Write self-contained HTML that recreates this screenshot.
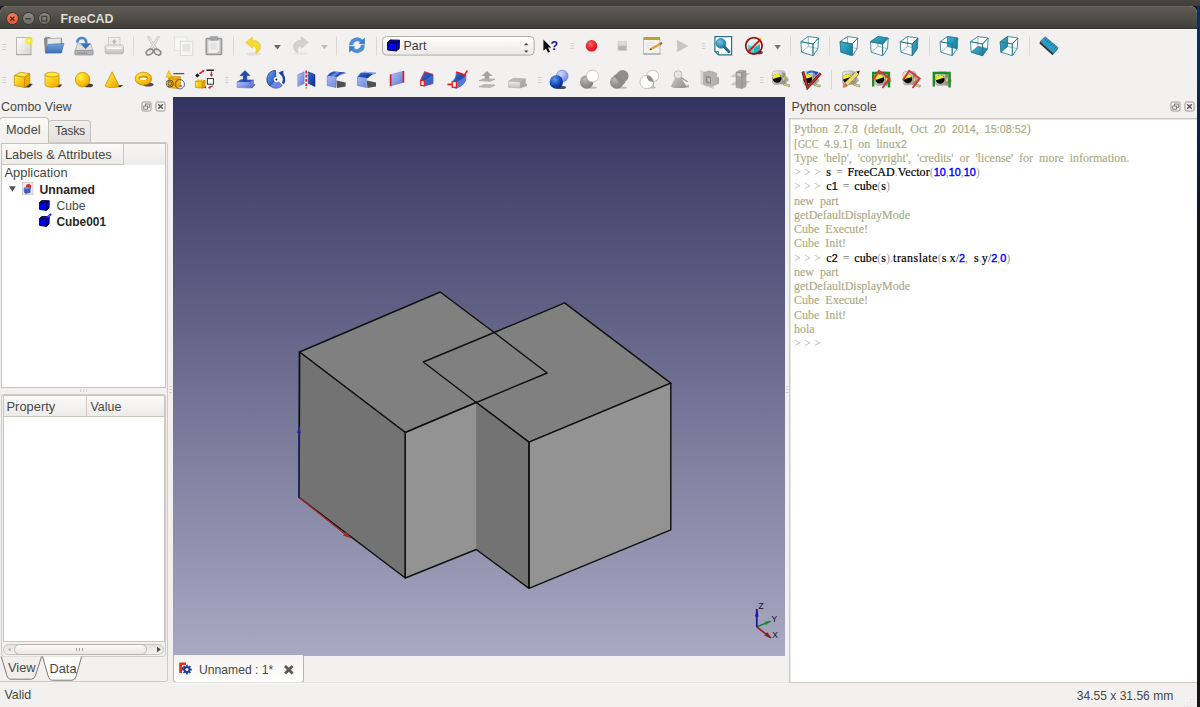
<!DOCTYPE html>
<html>
<head>
<meta charset="utf-8">
<title>FreeCAD</title>
<style>
html,body{margin:0;padding:0;}
body{width:1200px;height:707px;overflow:hidden;position:relative;background:#f2f1f0;font-family:"Liberation Sans","DejaVu Sans",sans-serif;font-size:13px;color:#484743;}
.abs{position:absolute;}
#desk{left:0;top:0;width:1200px;height:707px;background:#1b1b20;}
#topband{left:0;top:0;width:1200px;height:6px;background:linear-gradient(#46453f,#3d3c37);}
#win{left:0;top:6px;width:1197px;height:701px;background:#f2f1f0;border-radius:7px 7px 0 0;overflow:hidden;}
#title{left:0;top:0;width:1197px;height:22.5px;background:linear-gradient(#5f5c54,#403f3a);border-top:1px solid #67645c;border-bottom:1px solid #34332f;box-sizing:border-box;}
#title .t{left:60.5px;top:4px;font-weight:bold;font-size:12.4px;color:#dfdbd2;}
.wb{width:13px;height:13px;border-radius:50%;top:4.5px;box-sizing:border-box;border:1px solid #3a3935;}
.lbl{white-space:pre;line-height:16px;}
.sep{width:1px;background:#d9d6d2;}
.hdl{width:3px;height:8px;background:repeating-linear-gradient(#c9c6c2 0 1px,transparent 1px 3px);}
#view3d{left:173px;top:97px;width:612px;height:559px;background:linear-gradient(#33335f,#a9a9c3);}
.box{background:#fff;border:1px solid #c3bfb9;box-sizing:border-box;}
#console{left:789px;top:117.5px;width:411px;height:565px;border-color:#cdcac5;box-shadow:inset 1px 1px 0 #e9e7e4;}
#contxt{left:794px;top:122.3px;font-family:"Liberation Serif","DejaVu Serif",serif;font-size:12px;line-height:14.27px;color:#aaaa7f;white-space:pre;word-spacing:3px;-webkit-text-stroke:0.15px #aaaa7f;}
#contxt b{font-weight:normal;color:#000;-webkit-text-stroke:0.2px #000;letter-spacing:0.1px;}
#contxt i{font-style:normal;color:#0000ff;font-family:"Liberation Sans",sans-serif;font-size:10.8px;-webkit-text-stroke:0.4px #00f;}
#contxt u{text-decoration:none;color:#a0a0a4;-webkit-text-stroke:0;}
#contxt u.p{letter-spacing:3.2px;margin-right:-3.6px;}
#contxt u.k{color:#222;}
#contxt u.e{color:#777;margin-left:-1.2px;margin-right:-1.2px;}
#contxt b.t{letter-spacing:0.45px;}
#contxt s{text-decoration:none;font-family:"Liberation Sans",sans-serif;font-size:10.8px;}

.tab{box-sizing:border-box;border:1px solid #c3bfb9;border-bottom:none;border-radius:4px 4px 0 0;}
.hdr{background:linear-gradient(#fafaf9,#ecebe9);box-sizing:border-box;border-bottom:1px solid #c9c5bf;}
.btn{width:10px;height:10px;box-sizing:border-box;border:1px solid #8a8883;border-radius:2px;}
.b{font-weight:bold;color:#2a2927;}
</style>
</head>
<body>
<div id="desk" class="abs"></div>
<div id="topband" class="abs"></div>
<div id="win" class="abs">
  <div id="title" class="abs">
    <div class="abs wb" style="left:6px;background:radial-gradient(circle at 50% 30%,#f0815a,#e2502a);"></div>
    <div class="abs wb" style="left:22px;background:linear-gradient(#8b8a83,#6c6b65);"></div>
    <div class="abs wb" style="left:38px;background:linear-gradient(#8b8a83,#6c6b65);"></div>
    <svg class="abs" style="left:0;top:-1.5px" width="60" height="24" viewBox="0 0 60 24">
      <path d="M10.2 10.6 L14.4 14.8 M14.4 10.6 L10.2 14.8" stroke="#5a1c0c" stroke-width="1.3"/>
      <path d="M25.4 12.7 H31" stroke="#3e3d39" stroke-width="1.4"/>
      <rect x="41.7" y="10.3" width="5" height="4.8" fill="none" stroke="#3e3d39" stroke-width="1.2"/>
    </svg>
    <div class="abs t lbl">FreeCAD</div>
  </div>
</div>

<div class="abs" style="left:0;top:28.5px;width:1197px;height:1.5px;background:#fbfbfa;"></div>
<!-- TOOLBARS -->
<div id="tb" class="abs" style="left:0;top:0;"><svg class="abs" style="left:0;top:29px" width="1200" height="68" viewBox="0 29 1200 68">
<defs>
<linearGradient id="gPage" x1="0" y1="0" x2="1" y2="1"><stop offset="0" stop-color="#ffffff"/><stop offset="1" stop-color="#d4d4d4"/></linearGradient>
<radialGradient id="gGlow"><stop offset="0" stop-color="#ffffd0"/><stop offset="0.45" stop-color="#f4e622"/><stop offset="1" stop-color="#f4e622" stop-opacity="0"/></radialGradient>
<linearGradient id="gFold" x1="0" y1="0" x2="0" y2="1"><stop offset="0" stop-color="#76a4de"/><stop offset="1" stop-color="#3a70b6"/></linearGradient>
<linearGradient id="gGrayV" x1="0" y1="0" x2="0" y2="1"><stop offset="0" stop-color="#f2f2f2"/><stop offset="1" stop-color="#bdbdbd"/></linearGradient>
<linearGradient id="gStop" x1="0" y1="0" x2="0" y2="1"><stop offset="0" stop-color="#e2e2e2"/><stop offset="0.5" stop-color="#d0d0d0"/><stop offset="0.55" stop-color="#b8b8b8"/><stop offset="1" stop-color="#b0b0b0"/></linearGradient>
<radialGradient id="gRec" cx="0.4" cy="0.35" r="0.7"><stop offset="0" stop-color="#ff6a6a"/><stop offset="0.5" stop-color="#ee2830"/><stop offset="1" stop-color="#d8101c"/></radialGradient>
<radialGradient id="gLens" cx="0.4" cy="0.35" r="0.7"><stop offset="0" stop-color="#6acbe6"/><stop offset="1" stop-color="#14779c"/></radialGradient>
<linearGradient id="gTeal" x1="0" y1="0" x2="1" y2="1"><stop offset="0" stop-color="#45b3d2"/><stop offset="1" stop-color="#0f7a9a"/></linearGradient>
<linearGradient id="gCombo" x1="0" y1="0" x2="0" y2="1"><stop offset="0" stop-color="#ffffff"/><stop offset="1" stop-color="#e9e8e6"/></linearGradient>
<linearGradient id="gYel" x1="0" y1="0" x2="1" y2="1"><stop offset="0" stop-color="#fff23a"/><stop offset="1" stop-color="#f4a200"/></linearGradient>
<radialGradient id="gYelR" cx="0.38" cy="0.32" r="0.75"><stop offset="0" stop-color="#fff83c"/><stop offset="0.6" stop-color="#fcc010"/><stop offset="1" stop-color="#f09a00"/></radialGradient>
<linearGradient id="gBlueL" x1="0" y1="0" x2="1" y2="1"><stop offset="0" stop-color="#b4c4f4"/><stop offset="1" stop-color="#5a78d8"/></linearGradient>
<linearGradient id="gBlueM" x1="0" y1="0" x2="1" y2="1"><stop offset="0" stop-color="#6aa4f0"/><stop offset="1" stop-color="#1c4cb4"/></linearGradient>
<linearGradient id="gBlueD" x1="0" y1="0" x2="1" y2="1"><stop offset="0" stop-color="#3a6ad0"/><stop offset="1" stop-color="#0a2a88"/></linearGradient>
<radialGradient id="gBlueS" cx="0.38" cy="0.3" r="0.75"><stop offset="0" stop-color="#5a9af0"/><stop offset="0.6" stop-color="#1446b4"/><stop offset="1" stop-color="#08247c"/></radialGradient>
<radialGradient id="gBlueSL" cx="0.38" cy="0.3" r="0.75"><stop offset="0" stop-color="#d0dcfa"/><stop offset="1" stop-color="#6a80e0"/></radialGradient>
<radialGradient id="gGrayS" cx="0.38" cy="0.3" r="0.75"><stop offset="0" stop-color="#b8b8b8"/><stop offset="1" stop-color="#7c7c7c"/></radialGradient>
<linearGradient id="gGrayD" x1="0" y1="0" x2="1" y2="1"><stop offset="0" stop-color="#d8d8d8"/><stop offset="1" stop-color="#8c8c8c"/></linearGradient>
<linearGradient id="gTape" x1="0" y1="0" x2="1" y2="1"><stop offset="0" stop-color="#f4f4f4"/><stop offset="1" stop-color="#8a8a8a"/></linearGradient>
</defs>
<!-- handles / separators row1 -->
<g stroke="#d6d3cf" stroke-width="1">
<path d="M2.5 44.5h3.5M2.5 47h3.5M2.5 49.5h3.5"/>
<path d="M570.5 43.5h3.5M570.5 46h3.5M570.5 48.5h3.5"/>
<path d="M702 43.5h3.5M702 46h3.5M702 48.5h3.5"/>
</g>
<g stroke="#dcd9d5" stroke-width="1">
<path d="M133.5 36.5v19M233.5 36.5v19M336.5 36.5v19M376.5 36.5v19M790.5 36.5v19M829.5 36.5v19M929.5 36.5v19M1029.5 36.5v19"/>
</g>
<!-- new -->
<path d="M16.2 54.6h15.2" stroke="#9a9a9a" stroke-width="1.2"/>
<rect x="16.5" y="37.6" width="14.5" height="16.8" fill="url(#gPage)" stroke="#a8a8a8" stroke-width="0.8"/>
<circle cx="28.9" cy="40.9" r="5" fill="url(#gGlow)"/>
<!-- open -->
<path d="M44.3 38.6 L46 37.4 L50 37.4 L51 38.6 L61.6 38.2 L62 52.6 L45.4 52.8 Z" fill="#8c8c8c" stroke="#6e6e6e" stroke-width="0.6"/>
<path d="M47.4 38.8 L60.8 38.2 L61 46 L47.6 46 Z" fill="#e8e8e8" stroke="#b8b8b8" stroke-width="0.5"/>
<path d="M48.2 44.4 L64 43.4 L61 53 L45.6 53 Z" fill="url(#gFold)" stroke="#3568a8" stroke-width="0.6"/>
<!-- save -->
<path d="M77.6 43.6 L90.6 43.6 L93 50.6 L75 50.6 Z" fill="#dedede" stroke="#a4a4a4" stroke-width="0.7"/>
<rect x="74.9" y="50.4" width="18.2" height="4.6" rx="0.8" fill="#b4b4b4" stroke="#8e8e8e" stroke-width="0.7"/>
<path d="M77 53h10" stroke="#8a8a8a" stroke-width="1"/>
<path d="M77.2 42.6 Q77.6 37.8 82.6 38 Q86.4 38.4 86.2 43.6" fill="none" stroke="#4a86cc" stroke-width="2.7"/>
<path d="M80.2 43.4 L91 43.4 L85.6 49 Z" fill="#3673bb"/>
<!-- print (disabled) -->
<rect x="108.6" y="37.6" width="11.4" height="8" fill="#ececec" stroke="#c4c4c4" stroke-width="0.7"/>
<path d="M114.3 39.2 L116.6 41.8 L115.2 41.8 L115.2 44 L113.4 44 L113.4 41.8 L112 41.8 Z" fill="#b4b4b4"/>
<rect x="105.2" y="45" width="18.2" height="8.8" rx="1.6" fill="url(#gGrayV)" stroke="#b4b4b4" stroke-width="0.8"/>
<path d="M107.5 48.2h13.6" stroke="#fafafa" stroke-width="1.6"/>
<!-- cut -->
<g fill="none" stroke-linecap="round">
<path d="M148.6 37.4 L157 50.2" stroke="#bcbcbc" stroke-width="2.6"/><path d="M148.6 37.4 L157 50.2" stroke="#ececec" stroke-width="1.3"/>
<path d="M158.4 37.4 L150 50.2" stroke="#bcbcbc" stroke-width="2.6"/><path d="M158.4 37.4 L150 50.2" stroke="#ececec" stroke-width="1.3"/>
<ellipse cx="149.6" cy="52" rx="3.7" ry="2.5" transform="rotate(-32 149.6 52)" stroke="#8e8e8e" stroke-width="1.7"/>
<ellipse cx="157.4" cy="52" rx="3.7" ry="2.5" transform="rotate(32 157.4 52)" stroke="#8e8e8e" stroke-width="1.7"/>
</g>
<!-- copy (disabled) -->
<rect x="174.6" y="37" width="12.6" height="13.6" fill="#f7f7f7" stroke="#dedede" stroke-width="0.8"/>
<rect x="180.2" y="41.2" width="12.6" height="14.2" fill="#f5f5f5" stroke="#d6d6d6" stroke-width="0.8"/>
<rect x="182.6" y="44" width="7.6" height="7.6" fill="#e4e4e4"/>
<!-- paste -->
<rect x="206.2" y="38.4" width="15.4" height="16.2" rx="0.8" fill="#c8c8c8" stroke="#9a9a9a" stroke-width="1.5"/>
<rect x="208.4" y="40.6" width="11" height="12.4" fill="#f0f0f0"/>
<rect x="210.6" y="42.6" width="6.6" height="7" fill="#e2e2e2"/>
<rect x="210" y="36.6" width="7.8" height="3.6" rx="0.8" fill="#a6a6a6" stroke="#909090" stroke-width="0.5"/>
<path d="M217 53 L219.4 53 L219.4 50.6 Z" fill="#b8b8b8"/>
<!-- undo -->
<ellipse cx="253.5" cy="54" rx="7.5" ry="1.8" fill="#000" opacity="0.07"/>
<path d="M245.6 42.4 L252.6 37 L252.6 40.2 C258.4 40.2 261.2 44.2 260.2 48.4 C259.6 51 257.8 52.8 255.4 53.4 C257 50.6 256.4 46.4 252.6 45.6 L252.6 48.2 Z" fill="#f3da36" stroke="#e0c22a" stroke-width="0.6"/>
<path d="M273.9 44.9 L280.9 44.9 L277.4 49.4 Z" fill="#676767"/>
<!-- redo (disabled) -->
<ellipse cx="300.5" cy="53.6" rx="7.5" ry="1.6" fill="#000" opacity="0.04"/>
<path d="M308.4 42.4 L301.4 37 L301.4 40.2 C295.6 40.2 292.8 44.2 293.8 48.4 C294.4 51 296.2 52 298.2 52.4 C297 50 297.6 46.4 301.4 45.6 L301.4 48.2 Z" fill="#d2d2d2" stroke="#c6c6c6" stroke-width="0.6"/>
<path d="M321 44.9 L327.8 44.9 L324.4 49.2 Z" fill="#bcbcbc"/>
<!-- refresh -->
<g fill="none" stroke="#4f8fd4" stroke-width="3.9">
<path d="M351.2 45.4 A5.9 5.9 0 0 1 361.6 41.4"/>
<path d="M362.8 45 A5.9 5.9 0 0 1 352.4 49"/>
</g>
<path d="M358.6 43.8 L364.8 37.6 L364.8 44.4 Z" fill="#3f7dc2"/>
<path d="M355.4 46.6 L349.2 52.8 L349.2 46 Z" fill="#3f7dc2"/>
<!-- combo -->
<rect x="382.5" y="36.5" width="151.6" height="18.6" rx="4" fill="url(#gCombo)" stroke="#b3aea7" stroke-width="1"/>
<path d="M387.6 42.4 L390.2 40 L399.4 40.2 L399.2 48.6 L396.4 51 L387.6 50 Z" fill="#0000ee" stroke="#000030" stroke-width="1"/>
<path d="M387.6 42.4 L396.6 42.8 L399.4 40.2 M396.6 42.8 L396.4 51" fill="none" stroke="#000030" stroke-width="0.9"/>
<text x="403.6" y="50" font-family="Liberation Sans, sans-serif" font-size="12.4" fill="#3c3b37">Part</text>
<path d="M523.9 45.2 L528.5 45.2 L526.2 42.8 Z M523.9 50.4 L528.5 50.4 L526.2 52.8 Z" fill="#4c4b47"/>
<!-- whatsthis -->
<path d="M543.4 39.6 L543.4 50.8 L546 48.4 L548 52.8 L550 51.8 L548 47.6 L551.2 47.4 Z" fill="#0a0a0a"/>
<text x="550.4" y="50.4" font-family="Liberation Sans, sans-serif" font-size="12.5" font-weight="bold" fill="#18188c">?</text>
<!-- record -->
<circle cx="591.5" cy="45.8" r="5.8" fill="url(#gRec)"/>
<!-- stop disabled -->
<rect x="618" y="41.2" width="8.6" height="9.2" fill="url(#gStop)" stroke="#cacaca" stroke-width="0.6"/>
<!-- edit macro -->
<path d="M643 54h17.6" stroke="#a2a2a2" stroke-width="1.4"/>
<rect x="643.6" y="38.6" width="16.4" height="14.8" fill="#f3f3f3" stroke="#b4b4b4" stroke-width="0.8"/>
<rect x="643.6" y="37" width="16.4" height="3" fill="#b9a331"/>
<path d="M646 43h9M646 45.5h7M646 48h4" stroke="#dcdcdc" stroke-width="0.8"/>
<path d="M650.6 49.2 L660.2 44" stroke="#e3a234" stroke-width="2.3"/>
<path d="M648.8 50.2 L651 48.2 L651.8 49.8 Z" fill="#4a3a20"/>
<path d="M659.4 43.2 L661.6 42 L662.4 43.8 L660.4 45 Z" fill="#d43030"/>
<!-- play disabled -->
<path d="M677.4 40.4 L687.8 46 L677.4 51.6 Z" fill="#c6c6c6" stroke="#bababa" stroke-width="0.5"/>
<!-- zoom fit -->
<path d="M714.9 36.6 L731.6 36.6 L731.6 54.9 L718.6 54.9 L714.9 51.4 Z" fill="#ffffff" stroke="#2a7088" stroke-width="1.2"/>
<path d="M714.9 51.4 L718.6 51.4 L718.6 54.9" fill="none" stroke="#2a7088" stroke-width="0.9"/>
<path d="M724.2 46.8 L729 51.8" stroke="#176a8c" stroke-width="2.8" stroke-linecap="round"/>
<circle cx="720.9" cy="43.4" r="4.9" fill="url(#gLens)" stroke="#146c8e" stroke-width="0.6"/>
<!-- draw style -->
<ellipse cx="759.5" cy="52.6" rx="3.4" ry="1.8" fill="#222" opacity="0.8"/>
<path d="M748 44.6 L754 41.6 L760 44.2 L754 47.6 Z" fill="#b8f2f2"/>
<path d="M748 44.6 L754 47.6 L754 54 L748 51.2 Z" fill="#48d6dc"/>
<path d="M754 47.6 L760 44.2 L760 50.6 L754 54 Z" fill="#22b6c0"/>
<path d="M755 44.6 L761.4 38" stroke="#f2d21e" stroke-width="1.7"/>
<path d="M748 52 L760 39.8" stroke="#cc1a1a" stroke-width="1.8"/>
<circle cx="753.9" cy="45.8" r="8.2" fill="none" stroke="#9c1212" stroke-width="1.8"/>
<path d="M774.3 45 L781 45 L777.7 49.6 Z" fill="#777"/>
<!-- ruler -->
<path d="M1040 41.6 L1045.2 36.8 L1058 47.6 L1053.2 53.4 Z" fill="#2e9cc4" stroke="#1a7498" stroke-width="0.6"/>
<path d="M1040 41.6 L1053.2 53.4 L1052.6 55.2 L1039.6 43.4 Z" fill="#2a2a2a"/>
<path d="M1053.2 53.4 L1058 47.6 L1057.6 49.6 L1052.6 55.2 Z" fill="#156a8c"/>
<g stroke="#14607e" stroke-width="0.7"><path d="M1046.6 38.2l-1.6 1.8M1048.6 39.8l-2.4 2.8M1050.6 41.4l-1.6 1.8M1052.6 43.2l-2.4 2.8M1054.6 44.8l-1.6 1.8M1056.4 46.4l-2.4 2.8"/></g>

<g fill="none" stroke="#2b7b92" stroke-linejoin="round"><polygon points="800.9,41.7 808.3,36.5 818.6,38.0 817.9,48.7 813.0,55.7 801.6,52.2" fill="#fdfdfd" stroke="none"/><path d="M808.3,46.4 L808.3,36.5 M808.3,46.4 L817.9,48.7 M808.3,46.4 L801.6,52.2" stroke-width="0.6" opacity="0.85"/><polygon points="800.9,41.7 813.0,44.0 813.0,55.7 801.6,52.2" stroke-width="0.85"/><polygon points="800.9,41.7 808.3,36.5 818.6,38.0 813.0,44.0" stroke-width="0.85"/><polygon points="813.0,44.0 818.6,38.0 817.9,48.7 813.0,55.7" stroke-width="0.85"/></g>
<g fill="none" stroke="#2b7b92" stroke-linejoin="round"><polygon points="840.1,41.7 847.5,36.5 857.8,38.0 857.1,48.7 852.2,55.7 840.8,52.2" fill="#fdfdfd" stroke="none"/><path d="M847.5,46.4 L847.5,36.5 M847.5,46.4 L857.1,48.7 M847.5,46.4 L840.8,52.2" stroke-width="0.6" opacity="0.85"/><polygon points="840.1,41.7 852.2,44.0 852.2,55.7 840.8,52.2" fill="url(#gTeal)" stroke-width="0.6"/><polygon points="840.1,41.7 852.2,44.0 852.2,55.7 840.8,52.2" stroke-width="0.85"/><polygon points="840.1,41.7 847.5,36.5 857.8,38.0 852.2,44.0" stroke-width="0.85"/><polygon points="852.2,44.0 857.8,38.0 857.1,48.7 852.2,55.7" stroke-width="0.85"/></g>
<g fill="none" stroke="#2b7b92" stroke-linejoin="round"><polygon points="870.5,41.7 877.9,36.5 888.2,38.0 887.5,48.7 882.6,55.7 871.2,52.2" fill="#fdfdfd" stroke="none"/><path d="M877.9,46.4 L877.9,36.5 M877.9,46.4 L887.5,48.7 M877.9,46.4 L871.2,52.2" stroke-width="0.6" opacity="0.85"/><polygon points="870.5,41.7 882.6,44.0 888.2,38.0 877.9,36.5" fill="url(#gTeal)" stroke-width="0.6"/><polygon points="870.5,41.7 882.6,44.0 882.6,55.7 871.2,52.2" stroke-width="0.85"/><polygon points="870.5,41.7 877.9,36.5 888.2,38.0 882.6,44.0" stroke-width="0.85"/><polygon points="882.6,44.0 888.2,38.0 887.5,48.7 882.6,55.7" stroke-width="0.85"/></g>
<g fill="none" stroke="#2b7b92" stroke-linejoin="round"><polygon points="900.2,41.7 907.6,36.5 917.9,38.0 917.2,48.7 912.3,55.7 900.9,52.2" fill="#fdfdfd" stroke="none"/><path d="M907.6,46.4 L907.6,36.5 M907.6,46.4 L917.2,48.7 M907.6,46.4 L900.9,52.2" stroke-width="0.6" opacity="0.85"/><polygon points="912.3,44.0 917.9,38.0 917.2,48.7 912.3,55.7" fill="url(#gTeal)" stroke-width="0.6"/><polygon points="900.2,41.7 912.3,44.0 912.3,55.7 900.9,52.2" stroke-width="0.85"/><polygon points="900.2,41.7 907.6,36.5 917.9,38.0 912.3,44.0" stroke-width="0.85"/><polygon points="912.3,44.0 917.9,38.0 917.2,48.7 912.3,55.7" stroke-width="0.85"/></g>
<g fill="none" stroke="#2b7b92" stroke-linejoin="round"><polygon points="940.1,41.7 947.5,36.5 957.8,38.0 957.1,48.7 952.2,55.7 940.8,52.2" fill="#fdfdfd" stroke="none"/><path d="M947.5,46.4 L947.5,36.5 M947.5,46.4 L957.1,48.7 M947.5,46.4 L940.8,52.2" stroke-width="0.6" opacity="0.85"/><polygon points="947.5,36.5 957.8,38.0 957.1,48.7 947.5,46.4" fill="url(#gTeal)" stroke-width="0.6"/><polygon points="940.1,41.7 952.2,44.0 952.2,55.7 940.8,52.2" stroke-width="0.85"/><polygon points="940.1,41.7 947.5,36.5 957.8,38.0 952.2,44.0" stroke-width="0.85"/><polygon points="952.2,44.0 957.8,38.0 957.1,48.7 952.2,55.7" stroke-width="0.85"/></g>
<g fill="none" stroke="#2b7b92" stroke-linejoin="round"><polygon points="970.5,41.7 977.9,36.5 988.2,38.0 987.5,48.7 982.6,55.7 971.2,52.2" fill="#fdfdfd" stroke="none"/><path d="M977.9,46.4 L977.9,36.5 M977.9,46.4 L987.5,48.7 M977.9,46.4 L971.2,52.2" stroke-width="0.6" opacity="0.85"/><polygon points="971.2,52.2 982.6,55.7 987.5,48.7 977.9,46.4" fill="url(#gTeal)" stroke-width="0.6"/><polygon points="970.5,41.7 982.6,44.0 982.6,55.7 971.2,52.2" stroke-width="0.85"/><polygon points="970.5,41.7 977.9,36.5 988.2,38.0 982.6,44.0" stroke-width="0.85"/><polygon points="982.6,44.0 988.2,38.0 987.5,48.7 982.6,55.7" stroke-width="0.85"/></g>
<g fill="none" stroke="#2b7b92" stroke-linejoin="round"><polygon points="1000.2,41.7 1007.6,36.5 1017.9,38.0 1017.2,48.7 1012.3,55.7 1000.9,52.2" fill="#fdfdfd" stroke="none"/><path d="M1007.6,46.4 L1007.6,36.5 M1007.6,46.4 L1017.2,48.7 M1007.6,46.4 L1000.9,52.2" stroke-width="0.6" opacity="0.85"/><polygon points="1000.2,41.7 1007.6,36.5 1007.6,46.4 1000.9,52.2" fill="url(#gTeal)" stroke-width="0.6"/><polygon points="1000.2,41.7 1012.3,44.0 1012.3,55.7 1000.9,52.2" stroke-width="0.85"/><polygon points="1000.2,41.7 1007.6,36.5 1017.9,38.0 1012.3,44.0" stroke-width="0.85"/><polygon points="1012.3,44.0 1017.9,38.0 1017.2,48.7 1012.3,55.7" stroke-width="0.85"/></g>
<!-- handles / separators row2 -->
<g stroke="#d6d3cf" stroke-width="1">
<path d="M2.5 77.5h3.5M2.5 80h3.5M2.5 82.5h3.5"/>
<path d="M225 77.5h3.5M225 80h3.5M225 82.5h3.5"/>
<path d="M538 77.5h3.5M538 80h3.5M538 82.5h3.5"/>
<path d="M760 77.5h3.5M760 80h3.5M760 82.5h3.5"/>
</g>
<path d="M831.5 69.5v19.5" stroke="#dcd9d5" stroke-width="1"/>
<!-- box -->
<path d="M24.5 87.5 L29.8 83.6 L32.8 84 L29.4 87.6 Z" fill="#3c3c3c"/>
<g stroke="#b8860e" stroke-width="0.7" stroke-linejoin="round">
<path d="M14.3 75.6 L20.2 72.3 L29.8 73.6 L24.6 77.2 Z" fill="#ffea3a"/>
<path d="M14.3 75.6 L24.6 77.2 L24.6 87.5 L14.3 85.4 Z" fill="url(#gYel)"/>
<path d="M24.6 77.2 L29.8 73.6 L29.8 83.6 L24.6 87.5 Z" fill="#f6aa04"/>
</g>
<!-- cylinder -->
<path d="M55 87 L59 84.4 L62.4 84.6 L60 87.2 Z" fill="#3c3c3c"/>
<path d="M45 74.6 L45 84.8 A7 2.4 0 0 0 59 84.8 L59 74.6 Z" fill="url(#gYel)" stroke="#b8860e" stroke-width="0.7"/>
<ellipse cx="52" cy="74.6" rx="7" ry="2.4" fill="#ffe936" stroke="#b8860e" stroke-width="0.7"/>
<!-- sphere -->
<ellipse cx="88.4" cy="85.4" rx="4.6" ry="1.8" fill="#3c3c3c"/>
<circle cx="82.6" cy="79.6" r="7.3" fill="url(#gYelR)" stroke="#c08c10" stroke-width="0.7"/>
<!-- cone -->
<path d="M115.6 87 L119 85 L123.2 85 L120.4 87.3 Z" fill="#3c3c3c"/>
<path d="M112.1 71.8 L105.2 85.6 A6.9 2 0 0 0 119 85.6 Z" fill="url(#gYel)" stroke="#b8860e" stroke-width="0.7" stroke-linejoin="round"/>
<!-- torus -->
<ellipse cx="148.2" cy="84.6" rx="5.6" ry="2" fill="#3c3c3c" opacity="0.9"/>
<ellipse cx="143.4" cy="78.7" rx="8.3" ry="6.5" fill="url(#gYelR)" stroke="#b8860e" stroke-width="0.7"/>
<ellipse cx="143.2" cy="78" rx="4.4" ry="2" fill="#e09200" stroke="#b8860e" stroke-width="0.7"/><ellipse cx="143.2" cy="78.7" rx="3.6" ry="1.3" fill="#f4f1ea"/>
<!-- primitives -->
<path d="M169 70.4 L166 77.2 L172 77.2 Z" fill="#ffd81e" stroke="#c89a10" stroke-width="0.5"/>
<path d="M168.4 78.4 L172.6 76.2 L180.4 76.8 L180.4 86.4 L176.6 88.4 L168.4 87.6 Z" fill="#f6b008" stroke="#b8860e" stroke-width="0.6"/>
<path d="M168.4 78.4 L176.6 79.2 L180.4 76.8 M176.6 79.2 L176.6 88.4" fill="none" stroke="#b8860e" stroke-width="0.6"/>
<path d="M173.4 73.6h10.8" stroke="#555" stroke-width="1.3"/>
<circle cx="169.8" cy="83.6" r="3.5" fill="none" stroke="#3a3422" stroke-width="0.8"/>
<circle cx="169.8" cy="83.6" r="1.9" fill="none" stroke="#3a3422" stroke-width="0.7"/>
<circle cx="179.8" cy="84.2" r="4.7" fill="none" stroke="#3c3c90" stroke-width="0.8"/>
<path d="M179.4 86h2.6" stroke="#444" stroke-width="1"/>
<!-- shape builder -->
<path d="M203 88 L206 86 L206 88.2 Z" fill="#444"/>
<g stroke="#b8860e" stroke-width="0.6" stroke-linejoin="round">
<path d="M195.4 81.4 L198 80 L205.2 80.4 L202.6 82 Z" fill="#ffe936"/>
<path d="M195.4 81.4 L202.6 82 L202.6 88.2 L195.4 87.4 Z" fill="url(#gYel)"/>
<path d="M202.6 82 L205.2 80.4 L205.2 86.6 L202.6 88.2 Z" fill="#f0a000"/>
</g>
<path d="M197.4 73.2 L199.6 75.4 L197.4 77.6 L195.2 75.4 Z" fill="#111"/>
<path d="M206.4 70.2h7.4" stroke="#111" stroke-width="1.4"/>
<rect x="207.4" y="78.6" width="6" height="5.6" fill="#fff" stroke="#333" stroke-width="1"/>
<g stroke="#e01818" stroke-width="1.3" fill="#e01818">
<path d="M199.8 73.4 L203.6 70.8"/><path d="M204.6 70 L201.8 70.4 L203.4 72.4 Z" stroke="none"/><path d="M199 74 L201.6 73.8 L200.2 71.8 Z" stroke="none"/>
<path d="M211.4 71.6 L211.4 75.4"/><path d="M211.4 77 L209.8 74.4 L213 74.4 Z" stroke="none"/>
<path d="M209.4 87.4 L212.8 86"/><path d="M207.8 88 L210.4 88.8 L210 86 Z" stroke="none"/>
</g>
<!-- extrude -->
<path d="M250 88 L253.6 84 L255.6 84.4 L252 88.2 Z" fill="#555"/>
<path d="M237 82 L241 79.6 L253.6 80 L250 82.6 Z" fill="#2a52b8" stroke="#5a70d0" stroke-width="0.5"/>
<path d="M237 82 L250 82.6 L250 88 L237 87.4 Z" fill="url(#gBlueL)" stroke="#6a7ad8" stroke-width="0.5"/>
<path d="M250 82.6 L253.6 80 L253.6 85.2 L250 88 Z" fill="#6a80dc" stroke="#6a7ad8" stroke-width="0.5"/>
<path d="M245 70.6 L250 75.6 L246.8 75.6 L246.8 80.6 L243.2 80.6 L243.2 75.6 L240 75.6 Z" fill="#1d50b4" stroke="#0c2e80" stroke-width="0.5"/>
<!-- revolve -->
<path d="M276 79.3 L275.4 70.4 A8.9 8.9 0 0 0 270 86 Z" fill="url(#gBlueM)" stroke="#0a2470" stroke-width="0.7"/>
<path d="M276 79.3 L270 86 A8.9 8.9 0 0 0 282.4 85.6 Z" fill="#6f86e0" stroke="#3a50b0" stroke-width="0.6"/>
<path d="M280 72.6 A8 8 0 0 1 283 83.6" fill="none" stroke="#1a40a0" stroke-width="2.4"/>
<path d="M278.4 72.8 L283.4 70.4 L283.2 75.4 Z" fill="#1a40a0"/>
<circle cx="276.4" cy="79.6" r="2.6" fill="#fff"/><circle cx="276.4" cy="79.6" r="1" fill="#111"/>
<!-- mirror -->
<path d="M297.8 74.6 L304.2 71.8 L304.2 83.4 L297.8 86.6 Z" fill="url(#gBlueL)" stroke="#6a7ad8" stroke-width="0.5"/>
<path d="M308.2 71.8 L315 74.6 L315 86.6 L308.2 83.4 Z" fill="url(#gBlueD)" stroke="#0c2e80" stroke-width="0.5"/>
<path d="M306.2 70.6 L306.2 88.2" stroke="#f01818" stroke-width="1.7" stroke-dasharray="2.8 1.4"/>
<!-- fillet -->
<path d="M336.4 80.4 L345.6 82.6 L345.6 86.4 L337 88 Z" fill="#505050"/>
<path d="M327.2 76.2 L333.6 72 L345.6 73 L338.6 75.6 Q336 76.6 336 79.6 L336 87.6 L327.2 85.6 Z" fill="url(#gBlueL)" stroke="#5a6cd0" stroke-width="0.5"/>
<path d="M327.4 75.8 Q330 71.6 334.4 71.4 L345.4 72.6 Q340 73.6 337.4 76.8 Z" fill="url(#gBlueD)"/>
<path d="M336.4 72 L340 72.4 L333 77.2 L329.6 76.6 Z" fill="#8aa2ee" opacity="0.7"/>
<!-- chamfer -->
<path d="M366.8 80.4 L376 82.6 L376 86.4 L367.4 88 Z" fill="#505050"/>
<path d="M357.4 77 L364 72 L376 73 L369 76 L366.4 79.6 L366.4 87.6 L357.4 85.6 Z" fill="url(#gBlueL)" stroke="#5a6cd0" stroke-width="0.5"/>
<path d="M357.6 76.8 L361 72.6 L373 73.6 L368 78 Z" fill="url(#gBlueD)"/>
<path d="M364.4 72 L376 73 L373 73.6 L361 72.6 Z" fill="#9ab0f2"/>
<!-- ruled surface -->
<path d="M390.6 74.6 L403.4 71.2 L403.4 82.4 L390.6 86 Z" fill="url(#gBlueL)" stroke="#5a6cd0" stroke-width="0.4"/>
<path d="M390.6 74.4 L390.6 86.2 M403.4 71 L403.4 82.6" stroke="#f01818" stroke-width="1.7"/>
<!-- loft -->
<path d="M424.6 71.6 L433 74.4 L433 83.6 L424.4 86 L420.6 85 L420.6 80 Z" fill="url(#gBlueD)" stroke="#f03030" stroke-width="0.9" stroke-linejoin="round"/>
<path d="M424.4 80.6 L433 74.4 L433 83.6 L424.4 86 Z" fill="#3a66cc"/>
<rect x="420.8" y="80.6" width="3.4" height="5" fill="#fff" stroke="#f01818" stroke-width="1.1"/>
<!-- sweep -->
<path d="M456.4 72 L466 75.4 Q467.4 84 456.4 88.4 L452.4 87.4 L452.4 81.6 Q456.4 78 456.4 72 Z" fill="url(#gBlueD)" stroke="#4a62cc" stroke-width="0.5"/>
<path d="M456.4 82 Q462 80 466 75.4 Q467.4 84 456.4 88.4 Z" fill="#5a78d8"/>
<path d="M456.2 72 L466.2 75.4" stroke="#f01818" stroke-width="1.5"/>
<path d="M464 76 L467.4 70.4" stroke="#f01818" stroke-width="1.5"/>
<rect x="452.2" y="81.6" width="4.2" height="5.6" fill="#fff" stroke="#f01818" stroke-width="1.2"/>
<path d="M447.4 84.4h5" stroke="#f01818" stroke-width="1.7"/>
<!-- offset disabled -->
<path d="M487 71 L492.4 76 L489.2 76 L489.2 80 L484.8 80 L484.8 76 L481.6 76 Z" fill="#a2a2a2"/>
<path d="M479 80.6 L484 78.8 L495 79.2 L490 81.4 Z" fill="#b8b8b8" stroke="#9a9a9a" stroke-width="0.6"/>
<path d="M479 86.8 L484 84.6 L495 85 L490 87.6 Z" fill="#bcbcbc" stroke="#9a9a9a" stroke-width="0.6"/>
<!-- thickness disabled -->
<path d="M520 86 L527 83.6 L527 86 L521 88 Z" fill="#aaa"/>
<path d="M508.6 81.2 L513.6 78.2 L525.4 78.8 L520.4 82 Z" fill="#b8b8b8" stroke="#a6a6a6" stroke-width="0.5"/>
<path d="M508.6 81.2 L520.4 82 L520.4 88 L508.6 87.2 Z" fill="url(#gGrayV)" stroke="#a6a6a6" stroke-width="0.5"/>
<path d="M520.4 82 L525.4 78.8 L525.4 84.6 L520.4 88 Z" fill="#a8a8a8" stroke="#a6a6a6" stroke-width="0.5"/>
<!-- boolean -->
<ellipse cx="561" cy="87.4" rx="5" ry="1.6" fill="#222" opacity="0.8"/>
<circle cx="562.2" cy="76.1" r="6" fill="url(#gBlueSL)" stroke="#6a78d8" stroke-width="0.5"/>
<circle cx="556.3" cy="82" r="6.7" fill="url(#gBlueS)"/>
<!-- cut disabled -->
<ellipse cx="592" cy="87.6" rx="5" ry="1.2" fill="#888" opacity="0.5"/>
<circle cx="586.6" cy="82" r="6.7" fill="url(#gGrayS)"/>
<circle cx="592.5" cy="76.1" r="6" fill="#fff" stroke="#b0b0b0" stroke-width="0.7"/>
<!-- fuse disabled -->
<ellipse cx="622" cy="87.6" rx="5" ry="1.2" fill="#888" opacity="0.5"/>
<circle cx="622.6" cy="76.1" r="6" fill="#8e8e8e"/>
<circle cx="616.7" cy="82" r="6.7" fill="url(#gGrayS)"/>
<path d="M613.6 76 L617.2 73.6 L625.6 82 L622.6 85.4 Z" fill="#8a8a8a"/>
<!-- common disabled -->
<ellipse cx="652" cy="87.4" rx="4" ry="1" fill="#888" opacity="0.5"/>
<circle cx="652.7" cy="76.1" r="6" fill="#fff" stroke="#a8a8a8" stroke-width="0.7"/>
<circle cx="646.7" cy="82" r="6.7" fill="#fff" stroke="#a8a8a8" stroke-width="0.7"/>
<path d="M646.8 75.4 A6 6 0 0 0 653.2 82 A6.7 6.7 0 0 0 646.8 75.4 Z" fill="#8c8c8c"/>
<path d="M653.4 82v5" stroke="#999" stroke-width="0.7"/>
<!-- check geometry disabled -->
<path d="M680 88 L689 84.4 L689 87.6 Z" fill="#999" opacity="0.7"/>
<path d="M677.8 72.4 L670.8 86.4 A8 1.8 0 0 0 686.6 86.4 Z" fill="url(#gGrayD)"/>
<circle cx="678" cy="74.6" r="3.9" fill="#e6e6e6" stroke="#b0b0b0" stroke-width="0.8"/>
<path d="M681 77.6 L687.6 81.8" stroke="#9a9a9a" stroke-width="1.3"/>
<!-- section disabled -->
<path d="M700.8 70.6 L704 72 L704 85.6 L713.4 88.4 L713.4 86.6 L701 84 Z" fill="#d8d8d8" stroke="#c2c2c2" stroke-width="0.5"/>
<path d="M703.6 72.6 L709 70.8 L716.6 73 L716.6 84.4 L711 86.4 L703.6 84 Z" fill="#b4b4b4" stroke="#9c9c9c" stroke-width="0.5"/>
<path d="M705.6 75.4 L711 77 L711 84 L705.6 82.4 Z" fill="#8e8e8e"/>
<path d="M707.4 77.4 L710 78.2 L710 82 L707.4 81.2 Z" fill="#c2c2c2"/>
<path d="M716.6 77.6 L719 77 L719 83.6 L716.6 84.4 Z" fill="#a8a8a8"/>
<!-- cross sections disabled -->
<path d="M730.6 76.6 L738 72.6 L750 73.6 L743 77.6 Z" fill="#c8c8c8" stroke="#b0b0b0" stroke-width="0.4" opacity="0.85"/>
<path d="M730.6 84.6 L738 80.6 L750 81.6 L743 85.6 Z" fill="#c8c8c8" stroke="#b0b0b0" stroke-width="0.4" opacity="0.85"/>
<path d="M736 72.2 L740 70.2 L746 70.8 L746 86.6 L742 88.6 L736 87.6 Z" fill="#9e9e9e" stroke="#8a8a8a" stroke-width="0.5" opacity="0.9"/>
<path d="M736 72.2 L742 73 L746 70.8 M742 73 L742 88.6" fill="none" stroke="#858585" stroke-width="0.5"/>
<path d="M737.4 73 L741 73.4 L741 76.4 L737.4 76 Z" fill="#d0d0d0"/>

<g transform="translate(771.9,70.5)"><path d="M9 12 L14.6 5.6 L17 9.6 L12 15 Z" fill="#666" opacity="0.5"/><path d="M11.6 12.6 L18 14.4 L17.4 16.2 L11.6 14.4 Z" fill="#ddd478" stroke="#77775a" stroke-width="0.5"/><path d="M0.4 3 Q0.4 0.6 3 0.4 L10.4 0.2 Q12.6 0.4 13.4 2.4 L13.6 10.6 Q13.4 13 11 13.4 L3.4 14 Q0.8 14 0.6 11.6 Z" fill="url(#gTape)" stroke="#909090" stroke-width="0.5"/><path d="M10.4 1.4 L13 3 L13.2 11 L10.6 12.8 Z" fill="#8e8e8e"/><circle cx="5.2" cy="7.8" r="4.4" fill="#0a0a0a"/><path d="M0.9 8.6 A4.4 4.4 0 0 1 9.2 5.9 Z" fill="#f4ee1e"/><path d="M11.2 7 L12.8 5.8 L12.8 9.4 L11.2 10.6 Z" fill="#e6dc2a"/></g>
<g transform="translate(802.5,71.0)"><path d="M9 12 L14.6 5.6 L17 9.6 L12 15 Z" fill="#666" opacity="0.5"/><path d="M11.6 12.6 L18 14.4 L17.4 16.2 L11.6 14.4 Z" fill="#ddd478" stroke="#77775a" stroke-width="0.5"/><path d="M0.4 3 Q0.4 0.6 3 0.4 L10.4 0.2 Q12.6 0.4 13.4 2.4 L13.6 10.6 Q13.4 13 11 13.4 L3.4 14 Q0.8 14 0.6 11.6 Z" fill="url(#gTape)" stroke="#909090" stroke-width="0.5"/><path d="M10.4 1.4 L13 3 L13.2 11 L10.6 12.8 Z" fill="#8e8e8e"/><circle cx="5.2" cy="7.8" r="4.4" fill="#0a0a0a"/><path d="M0.9 8.6 A4.4 4.4 0 0 1 9.2 5.9 Z" fill="#f4ee1e"/><path d="M11.2 7 L12.8 5.8 L12.8 9.4 L11.2 10.6 Z" fill="#e6dc2a"/></g>
<path d="M806.6 73.4 Q811.6 69.4 816.6 73.6" fill="none" stroke="#2a6ad0" stroke-width="1.8"/><path d="M814 71.2 L818.6 72 L816 75.8 Z" fill="#1a4aa8"/>
<path d="M802.8 71.6 L807.6 87.6 L820.6 73.4" fill="none" stroke="#1a1a1a" stroke-width="2.8" stroke-linejoin="miter"/><path d="M802.8 71.6 L807.6 87.6 L820.6 73.4" fill="none" stroke="#e62424" stroke-width="1.6" stroke-linejoin="miter"/>
<g transform="translate(842.0,70.8)"><path d="M9 12 L14.6 5.6 L17 9.6 L12 15 Z" fill="#666" opacity="0.5"/><path d="M11.6 12.6 L18 14.4 L17.4 16.2 L11.6 14.4 Z" fill="#ddd478" stroke="#77775a" stroke-width="0.5"/><path d="M0.4 3 Q0.4 0.6 3 0.4 L10.4 0.2 Q12.6 0.4 13.4 2.4 L13.6 10.6 Q13.4 13 11 13.4 L3.4 14 Q0.8 14 0.6 11.6 Z" fill="url(#gTape)" stroke="#909090" stroke-width="0.5"/><path d="M10.4 1.4 L13 3 L13.2 11 L10.6 12.8 Z" fill="#8e8e8e"/><circle cx="5.2" cy="7.8" r="4.4" fill="#0a0a0a"/><path d="M0.9 8.6 A4.4 4.4 0 0 1 9.2 5.9 Z" fill="#f4ee1e"/><path d="M11.2 7 L12.8 5.8 L12.8 9.4 L11.2 10.6 Z" fill="#e6dc2a"/></g>
<path d="M845 85.4 L857.6 72.8" stroke="#7a6a30" stroke-width="4.6"/><path d="M845 85.4 L857.6 72.8" stroke="#ecdc78" stroke-width="3.6"/><path d="M859.8 70.4 L856.4 71.8 L858.6 74 Z" fill="#111"/><path d="M843.2 87.2 L845.4 83.4 L847.2 85.2 Z" fill="#d46a6a" stroke="#a04040" stroke-width="0.5"/><circle cx="844.4" cy="86" r="1.7" fill="#d87878"/>
<g transform="translate(874.6,71.4)"><path d="M9 12 L14.6 5.6 L17 9.6 L12 15 Z" fill="#666" opacity="0.5"/><path d="M0.4 3 Q0.4 0.6 3 0.4 L10.4 0.2 Q12.6 0.4 13.4 2.4 L13.6 10.6 Q13.4 13 11 13.4 L3.4 14 Q0.8 14 0.6 11.6 Z" fill="url(#gTape)" stroke="#909090" stroke-width="0.5"/><path d="M10.4 1.4 L13 3 L13.2 11 L10.6 12.8 Z" fill="#8e8e8e"/><circle cx="5.2" cy="7.8" r="4.4" fill="#0a0a0a"/><path d="M0.9 8.6 A4.4 4.4 0 0 1 9.2 5.9 Z" fill="#f4ee1e"/><path d="M11.2 7 L12.8 5.8 L12.8 9.4 L11.2 10.6 Z" fill="#e6dc2a"/></g>
<path d="M873.2 86.4 L873.2 73 L889 73 L889 87.4" fill="none" stroke="#1f8c1f" stroke-width="2.4"/>
<path d="M872.6 80.4 L879 70.8 L889.4 78.4 L882.4 88" fill="none" stroke="#d83434" stroke-width="1.9"/>
<g transform="translate(902.6,71.0)"><path d="M9 12 L14.6 5.6 L17 9.6 L12 15 Z" fill="#666" opacity="0.5"/><path d="M11.6 12.6 L18 14.4 L17.4 16.2 L11.6 14.4 Z" fill="#ddd478" stroke="#77775a" stroke-width="0.5"/><path d="M0.4 3 Q0.4 0.6 3 0.4 L10.4 0.2 Q12.6 0.4 13.4 2.4 L13.6 10.6 Q13.4 13 11 13.4 L3.4 14 Q0.8 14 0.6 11.6 Z" fill="url(#gTape)" stroke="#909090" stroke-width="0.5"/><path d="M10.4 1.4 L13 3 L13.2 11 L10.6 12.8 Z" fill="#8e8e8e"/><circle cx="5.2" cy="7.8" r="4.4" fill="#0a0a0a"/><path d="M0.9 8.6 A4.4 4.4 0 0 1 9.2 5.9 Z" fill="#f4ee1e"/><path d="M11.2 7 L12.8 5.8 L12.8 9.4 L11.2 10.6 Z" fill="#e6dc2a"/></g>
<path d="M902.8 80.4 L909.2 70.8 L919.6 78.4 L912.6 88" fill="none" stroke="#d83434" stroke-width="1.9"/>
<g transform="translate(935.0,71.6)"><path d="M9 12 L14.6 5.6 L17 9.6 L12 15 Z" fill="#666" opacity="0.5"/><path d="M0.4 3 Q0.4 0.6 3 0.4 L10.4 0.2 Q12.6 0.4 13.4 2.4 L13.6 10.6 Q13.4 13 11 13.4 L3.4 14 Q0.8 14 0.6 11.6 Z" fill="url(#gTape)" stroke="#909090" stroke-width="0.5"/><path d="M10.4 1.4 L13 3 L13.2 11 L10.6 12.8 Z" fill="#8e8e8e"/><circle cx="5.2" cy="7.8" r="4.4" fill="#0a0a0a"/><path d="M0.9 8.6 A4.4 4.4 0 0 1 9.2 5.9 Z" fill="#f4ee1e"/><path d="M11.2 7 L12.8 5.8 L12.8 9.4 L11.2 10.6 Z" fill="#e6dc2a"/></g>
<path d="M933.8 86.4 L933.8 73 L949.6 73 L949.6 87.4" fill="none" stroke="#1f8c1f" stroke-width="2.4"/>

</svg>
</div><!--/tb-->

<!-- COMBO VIEW -->
<div id="combo" class="abs" style="left:0;top:0;">
  <div class="abs lbl" style="left:1px;top:99.3px;font-size:12.5px;">Combo View</div>
  <svg class="abs" style="left:141px;top:101px" width="26" height="12" viewBox="0 0 26 12">
    <rect x="1" y="1" width="9" height="9" rx="1.5" fill="#f4f3f2" stroke="#908e89" stroke-width="0.9"/>
    <rect x="4.5" y="3" width="3.8" height="3.4" fill="none" stroke="#6a6863" stroke-width="0.8"/>
    <rect x="2.8" y="5" width="3.6" height="3.2" fill="#f4f3f2" stroke="#6a6863" stroke-width="0.8"/>
    <rect x="15" y="1" width="9" height="9" rx="1.5" fill="#f4f3f2" stroke="#908e89" stroke-width="0.9"/>
    <path d="M17.2 3.2 L21.8 7.8 M21.8 3.2 L17.2 7.8" stroke="#55534f" stroke-width="1.35"/>
  </svg>
  <!-- tabs -->
  <div class="abs" style="left:0;top:142px;width:168px;height:540px;box-sizing:border-box;border:1px solid #cfccc7;border-left:none;border-radius:0 3px 3px 0;background:#f2f1f0;"></div>
  <div class="abs tab" style="left:48px;top:120px;width:43px;height:22px;background:linear-gradient(#f0efee,#e3e1de);"></div>
  <div class="abs tab" style="left:-1px;top:117px;width:50px;height:26px;background:linear-gradient(#fbfbfa,#f2f1f0 70%);"></div>
  <div class="abs lbl" style="left:6px;top:122px;font-size:12.7px;">Model</div>
  <div class="abs lbl" style="left:55px;top:122.6px;font-size:12.2px;letter-spacing:-0.25px;">Tasks</div>
  <!-- tree -->
  <div class="abs box" style="left:1px;top:143px;width:165px;height:245px;border-color:#c6c2bc;"></div>
  <div class="abs hdr" style="left:2px;top:144px;width:163px;height:21px;background:linear-gradient(#f7f6f5,#edecea);border-bottom:none;"></div>
  <div class="abs hdr" style="left:2px;top:144px;width:122px;height:21px;border-right:1px solid #c9c5bf;"></div>
  <div class="abs lbl" style="left:5px;top:147.3px;font-size:12.8px;">Labels &amp; Attributes</div>
  <div class="abs lbl" style="left:4.5px;top:165.3px;font-size:12.9px;">Application</div>
  <svg class="abs" style="left:8px;top:185px" width="9" height="8" viewBox="0 0 9 8"><polygon points="1,1.2 7.8,1.2 4.4,6.8" fill="#55534f"/></svg>
  <svg class="abs" style="left:22px;top:182px" width="12" height="13" viewBox="0 0 12 13">
    <rect x="0.5" y="0.5" width="10.5" height="12" fill="#ecebea" stroke="#c8c6c2" stroke-width="0.8"/>
    <circle cx="6.5" cy="4.6" r="2.6" fill="#e02a20"/>
    <path d="M2.2 6 L7 5 L8.2 6.2 L8.2 10.5 L3.4 11.4 L2.2 10.2 Z" fill="#3a5fc8" stroke="#2a3f98" stroke-width="0.5"/>
    <path d="M2.2 6 L7 5 L8.2 6.2 L3.4 7.2 Z" fill="#7d9be8"/>
  </svg>
  <div class="abs lbl b" style="left:39.5px;top:181.7px;font-size:12.2px;">Unnamed</div>
  <svg class="abs" style="left:38px;top:198.5px" width="14" height="13" viewBox="0 0 14 13">
    <path d="M1.6 3.4 L4 1.6 L11.2 1.8 L11 9 L8.6 11.4 L1.6 10.4 Z" fill="#0000ee" stroke="#00003a" stroke-width="1"/>
    <path d="M1.6 3.4 L8.8 3.8 L11.2 1.8 M8.8 3.8 L8.6 11.4" fill="none" stroke="#00003a" stroke-width="0.9"/>
  </svg>
  <div class="abs lbl" style="left:56.5px;top:198px;font-size:12.1px;">Cube</div>
  <svg class="abs" style="left:38px;top:212.5px" width="14" height="15" viewBox="0 0 14 15">
    <path d="M1.6 5.4 L4 3.6 L11.2 3.8 L11 11 L8.6 13.4 L1.6 12.4 Z" fill="#0000ee" stroke="#00003a" stroke-width="1"/>
    <path d="M1.6 5.4 L8.8 5.8 L11.2 3.8 M8.8 5.8 L8.6 13.4" fill="none" stroke="#00003a" stroke-width="0.9"/>
    <path d="M9 4.6 L12.6 1.4" stroke="#1a1aff" stroke-width="2" stroke-linecap="round"/>
    <path d="M10.5 3.4 L11.6 2.4" stroke="#cfd4ff" stroke-width="0.8"/>
  </svg>
  <div class="abs lbl b" style="left:56.5px;top:214.3px;font-size:11.9px;">Cube001</div>
  <!-- splitter -->
  <div class="abs" style="left:80px;top:389px;width:7px;height:3px;background:repeating-linear-gradient(90deg,#d3d0cc 0 1px,transparent 1px 3px);"></div>
  <!-- property -->
  <div class="abs" style="left:1px;top:393.5px;width:165px;height:263px;box-sizing:border-box;border:1px solid #cfccc7;border-radius:3px;background:#f2f1f0;"></div>
  <div class="abs box" style="left:2.5px;top:395px;width:162px;height:247px;border-color:#c9c5bf;"></div>
  <div class="abs hdr" style="left:3.5px;top:396px;width:160px;height:21px;"></div>
  <div class="abs" style="left:86px;top:396px;width:1px;height:20px;background:#cfccc7;"></div>
  <div class="abs lbl" style="left:6.5px;top:399px;font-size:12.9px;">Property</div>
  <div class="abs lbl" style="left:90.5px;top:398.5px;font-size:12.4px;">Value</div>
  <!-- scrollbar -->
  <div class="abs" style="left:3px;top:644px;width:161px;height:11px;box-sizing:border-box;border:1px solid #c9c6c0;border-radius:6px;background:linear-gradient(#e6e4e1,#f3f2f0);"></div>
  <div class="abs" style="left:14px;top:644px;width:133px;height:11px;box-sizing:border-box;border:1px solid #b9b5ae;border-radius:6px;background:linear-gradient(#fbfbfa,#e9e7e4);"></div>
  <div class="abs" style="left:76px;top:648px;width:7px;height:3px;background:repeating-linear-gradient(90deg,#a09d97 0 1px,transparent 1px 3px);"></div>
  <svg class="abs" style="left:4px;top:645px" width="160" height="9" viewBox="0 0 160 9"><polygon points="6.5,2.5 6.5,6.5 4,4.5" fill="#b5b2ad"/><polygon points="153,1.8 153,7.2 156.8,4.5" fill="#4a4945"/></svg>
  <!-- triangular tabs -->
  <svg class="abs" style="left:0;top:655px" width="90" height="28" viewBox="0 0 90 28">
    <path d="M1.2 1.5 L6.6 19.5 Q7.6 24.2 11 24.2 L31.5 24.2 Q34.5 24.2 35.6 20 L41.6 1.5" fill="#f0efed" stroke="#6f6c67" stroke-width="0.9"/>
    <path d="M42.6 1.5 L48 20.5 Q49 25.2 52.4 25.2 L72 25.2 Q75 25.2 76.2 21 L81.6 1.5" fill="#ffffff" stroke="#6f6c67" stroke-width="0.9"/>
  </svg>
  <div class="abs lbl" style="left:8px;top:659.5px;font-size:12.8px;">View</div>
  <div class="abs lbl" style="left:49.5px;top:660.5px;font-size:12.8px;">Data</div>
</div>

<!-- 3D VIEW -->
<div id="view3d" class="abs"><svg class="abs" style="left:0;top:0" width="612" height="559" viewBox="0 0 612 559">
<g stroke="#111" stroke-width="1.45" stroke-linejoin="round" stroke-linecap="round">
<polygon points="126.5,255.0 267.2,195.0 321.2,235.5 391.6,205.8 497.8,286.2 356.0,345.2 303.3,305.5 232.3,335.5" fill="#808080"/>
<polygon points="126.5,255.0 232.3,335.5 232.3,481.0 126.2,400.5" fill="#737373"/>
<polygon points="232.3,335.5 303.3,305.5 303.2,452.5 232.3,481.0" fill="#939393" stroke="none"/>
<polygon points="303.3,305.5 356.0,345.2 356.0,491.3 303.2,452.5" fill="#737373" stroke="none"/>
<polygon points="356.0,345.2 497.8,286.2 497.8,432.8 356.0,491.3" fill="#939393"/>
<polyline points="250.3,265.0 321.2,235.5 374.2,276.0 303.3,305.5 250.3,265.0" fill="none"/>
<polyline points="232.3,335.5 303.3,305.5 356.0,345.2" fill="none"/>
<polyline points="232.3,335.5 232.3,481.0 303.2,452.5 356.0,491.3 356.0,345.2" fill="none"/>
<polyline points="126.5,255.0 126.2,400.5" fill="none"/>
</g>
<line x1="126.19999999999999" y1="400.5" x2="126.19999999999999" y2="329" stroke="#1c1c9c" stroke-width="1.3"/>
<polygon points="124.2,336.0 127.6,336.0 126.2,328.0" fill="#2222aa"/>
<line x1="126.19999999999999" y1="400.5" x2="175" y2="439.5" stroke="#a02828" stroke-width="1.3"/>
<polygon points="170.0,438.5 173.0,434.5 178.0,441.5" fill="#a02828"/>
<!-- axis cross -->
<g stroke-linecap="butt">
<line x1="583.8" y1="529.8" x2="597.5" y2="524.3" stroke="#1a8a2a" stroke-width="1.6"/>
<polygon points="591.5,524.8 593.0,528.2 598.0,524.0" fill="#1a8a2a"/>
<line x1="583.8" y1="529.8" x2="597.7" y2="540.8" stroke="#8a1a1a" stroke-width="1.6"/>
<polygon points="591.5,538.5 594.3,535.3 598.5,541.5" fill="#8a1a1a"/>
<line x1="583.8" y1="530" x2="583.8" y2="512" stroke="#1a1a9a" stroke-width="1.8"/>
<polygon points="582.0,519.5 585.6,519.5 583.8,512.0" fill="#1a1a9a"/>
</g>
<g font-family="Liberation Sans, sans-serif" font-size="8.5" fill="#111">
<text x="585.6" y="512">Z</text>
<text x="598.5" y="525.3">Y</text>
<text x="599.3" y="541.4">X</text>
</g>
</svg></div>

<!-- DOC TAB -->
<div class="abs" style="left:173px;top:655px;width:130.5px;height:27.5px;box-sizing:border-box;border:1px solid #b9b4ad;border-top:none;border-radius:0 0 4px 4px;background:linear-gradient(#f4f3f2,#ffffff);"></div>
<svg class="abs" style="left:178px;top:661px" width="15" height="14" viewBox="0 0 15 14">
  <path d="M1.2 1.5 H8 V4 H4 V6 H7 V8.2 H4 V12 H1.2 Z" fill="#e0301e"/>
  <g fill="#1a3a9c"><circle cx="9" cy="8.6" r="3.4"/>
  <g stroke="#1a3a9c" stroke-width="1.7"><path d="M9 3.8V13.4M4.2 8.6H13.8M5.6 5.2L12.4 12M12.4 5.2L5.6 12"/></g></g>
  <circle cx="9" cy="8.6" r="1.5" fill="#f6f6f6"/>
</svg>
<div class="abs lbl" style="left:199px;top:661.6px;font-size:12.15px;">Unnamed : 1*</div>
<svg class="abs" style="left:283px;top:663.5px" width="12" height="12" viewBox="0 0 12 12"><path d="M2 2 L9.6 9.6 M9.6 2 L2 9.6" stroke="#5a5955" stroke-width="2.8"/></svg>
<!-- PYTHON CONSOLE -->
<div class="abs lbl" style="left:791.6px;top:99.2px;font-size:12.45px;">Python console</div>
<div id="console" class="abs box"></div>
<div id="contxt" class="abs">Python <s>2.7.8</s> (default, Oct <s>20</s> <s>2014</s>, <s>15:08:52</s>)
[<span style="display:inline-block;transform:scaleX(.82);transform-origin:0 50%;margin-right:-4.5px">GCC</span> <s>4.9.1</s>] on linux<s>2</s>
Type 'help', 'copyright', 'credits' or 'license' for more information.
<u class="p">&gt;&gt;&gt;</u> <b>s</b> <u class="e">=</u> <b>FreeCAD</b><u>.</u><b>Vector</b><u>(</u><i>10</i><u>,</u><i>10</i><u>,</u><i>10</i><u>)</u>
<u class="p">&gt;&gt;&gt;</u> <b>c<s>1</s></b> <u class="e">=</u> <b>cube</b><u>(</u><b>s</b><u>)</u>
new part
getDefaultDisplayMode
Cube Execute!
Cube Init!
<u class="p">&gt;&gt;&gt;</u> <b>c<s>2</s></b> <u class="e">=</u> <b>cube</b><u>(</u><b>s</b><u>).</u><b class="t">translate</b><u>(</u><b>s</b><u>.</u><b>x</b><u class="k">/</u><i>2</i><u>,</u> <b>s</b><u>.</u><b>y</b><u class="k">/</u><i>2</i><u>,</u><i>0</i><u>)</u>
new part
getDefaultDisplayMode
Cube Execute!
Cube Init!
hola
<u class="p">&gt;&gt;&gt;</u> </div>

<svg class="abs" style="left:1170.4px;top:101px" width="26" height="12" viewBox="0 0 26 12">
    <rect x="1" y="1" width="9" height="9" rx="1.5" fill="#f4f3f2" stroke="#908e89" stroke-width="0.9"/>
    <rect x="4.5" y="3" width="3.8" height="3.4" fill="none" stroke="#6a6863" stroke-width="0.8"/>
    <rect x="2.8" y="5" width="3.6" height="3.2" fill="#f4f3f2" stroke="#6a6863" stroke-width="0.8"/>
    <rect x="15" y="1" width="9" height="9" rx="1.5" fill="#f4f3f2" stroke="#908e89" stroke-width="0.9"/>
    <path d="M17.2 3.2 L21.8 7.8 M21.8 3.2 L17.2 7.8" stroke="#55534f" stroke-width="1.35"/>
  </svg>
<!-- splitter grips -->
<div class="abs" style="left:168.5px;top:386px;width:3px;height:7px;background:repeating-linear-gradient(#d4d1cd 0 1px,transparent 1px 3px);"></div>
<div class="abs" style="left:785.5px;top:386px;width:3px;height:7px;background:repeating-linear-gradient(#d4d1cd 0 1px,transparent 1px 3px);"></div>
<svg class="abs" style="left:1184px;top:695px" width="12" height="12" viewBox="0 0 12 12"><g fill="#e2e0dc"><rect x="9" y="1" width="1.2" height="1.2"/><rect x="6" y="4" width="1.2" height="1.2"/><rect x="9" y="4" width="1.2" height="1.2"/><rect x="3" y="7" width="1.2" height="1.2"/><rect x="6" y="7" width="1.2" height="1.2"/><rect x="9" y="7" width="1.2" height="1.2"/><rect x="0" y="10" width="1.2" height="1.2"/><rect x="3" y="10" width="1.2" height="1.2"/><rect x="6" y="10" width="1.2" height="1.2"/><rect x="9" y="10" width="1.2" height="1.2"/></g></svg>
<div class="abs" style="left:1197px;top:6px;width:3px;height:701px;background:linear-gradient(#0b2f6b 0,#0a2a60 60px,#0a1a40 170px,#16161a 215px,#16161a 100%);"></div>
<!-- STATUS BAR -->
<div class="abs" style="left:168px;top:682.3px;width:621px;height:1px;background:#e6e4e1;"></div>
<div class="abs" style="left:168px;top:683.3px;width:621px;height:1px;background:#f7f6f5;"></div>
<div class="abs lbl" style="left:4.5px;top:686.8px;font-size:12.4px;">Valid</div>
<div class="abs lbl" style="left:1076.8px;top:688px;font-size:12.05px;">34.55 x 31.56 mm</div>
</body>
</html>
